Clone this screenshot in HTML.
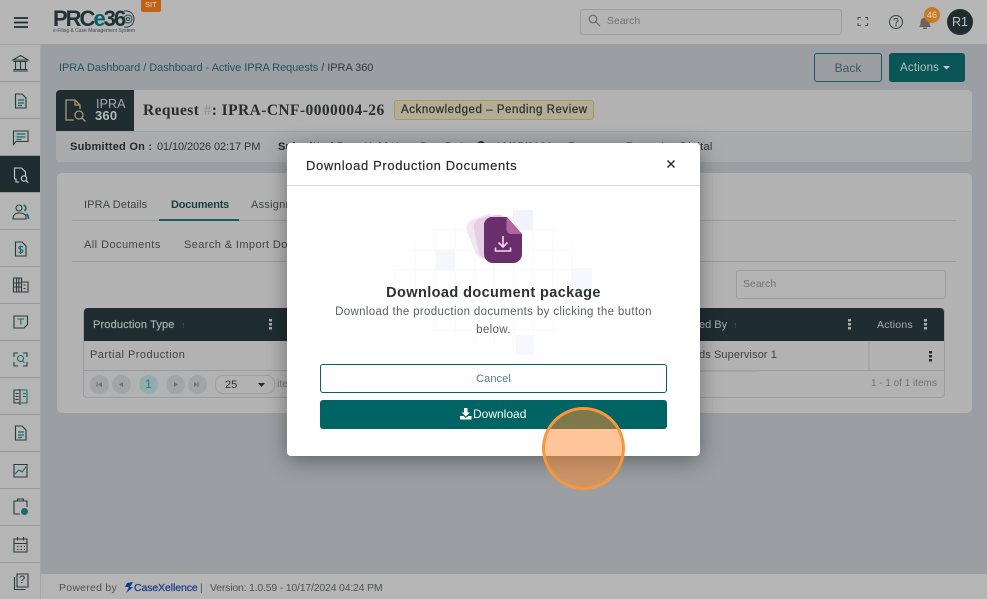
<!DOCTYPE html>
<html><head><meta charset="utf-8"><title>IPRA 360</title>
<style>
*{box-sizing:border-box}
html,body{margin:0;padding:0;width:987px;height:599px;overflow:hidden}
body{position:relative;background:#9b9fa3;font-family:"Liberation Sans",sans-serif;color:#333}
.a,.t{position:absolute}
.t{white-space:nowrap;line-height:16px;font-size:11.5px;letter-spacing:.25px;color:#3c3f41}
.b{font-weight:bold}
svg{position:absolute;overflow:visible}
.sep{position:absolute;left:0;width:40px;height:1px;background:#959799}
</style></head><body>

<!-- header -->
<div class="a" style="left:0;top:0;width:987px;height:44px;background:#b6b6b6"></div>
<svg style="left:14px;top:17px" width="15" height="11"><path d="M0 1h14M0 5.500h14M0 10h14" stroke="#1f2d30" stroke-width="1.700"/></svg>
<div class="t b" style="left:53px;top:7px;font-size:22px;line-height:24px;letter-spacing:-2px;color:#1f3236">PRC<span style="color:#00646a">e</span>36</div>
<svg style="left:123px;top:10px" width="13" height="18" fill="none" stroke="#2c4a4c" stroke-width="1.100"><path d="M1 1c6-1 10 3 10 8s-4 9-10 8"/><circle cx="5" cy="9" r="4"/><circle cx="5" cy="9" r="1.600"/></svg>
<div class="t" style="left:53px;top:27px;font-size:5px;line-height:8px;letter-spacing:-.03px;color:#3a4a4c">e-Filing &amp; Case Management System</div>
<div class="a" style="left:141px;top:0;width:20px;height:12px;background:#bf6217;border-radius:0 0 2px 2px"></div>
<div class="t" style="left:145px;top:0;font-size:7.500px;line-height:10px;color:#e8d8c8;letter-spacing:0">SIT</div>

<div class="a" style="left:580px;top:9px;width:262px;height:26px;border:1px solid #9a9c9e;border-radius:3px;background:#b4b4b4"></div>
<svg style="left:588px;top:14px" width="13" height="13" fill="none" stroke="#666" stroke-width="1.100"><circle cx="5" cy="5" r="3.800"/><path d="M8 8l4 4"/></svg>
<div class="t" style="left:607px;top:13px;font-size:10.500px;color:#6f7173;letter-spacing:0">Search</div>
<svg style="left:858px;top:17px" width="10" height="9" fill="none" stroke="#4a5052" stroke-width="1"><path d="M0 3V.5h3M7 .5h2.500V3M0 6v2.500h3M7 8.500h2.500V6"/></svg>
<svg style="left:889px;top:15px" width="14" height="14" fill="none" stroke="#3a4244" stroke-width="1"><circle cx="7" cy="7" r="6.500"/><path d="M5 5.500c0-3 4-3 4 0 0 1.500-2 1.500-2 3.200"/><circle cx="7" cy="10.500" r=".4"/></svg>
<svg style="left:918px;top:16px" width="14" height="13"><path d="M1 11c2-2 1-4 2-7s7-3 8 0 0 5 2 7z" fill="#6e6255"/><rect x="5" y="11.500" width="4" height="1.500" fill="#6e6255"/></svg>
<div class="a" style="left:924px;top:7px;width:16px;height:16px;border-radius:50%;background:#c97a25"></div>
<div class="t" style="left:924px;top:7px;width:16px;text-align:center;font-size:9px;color:#e6d9c7;letter-spacing:0">46</div>
<div class="a" style="left:947px;top:9px;width:26px;height:26px;border-radius:50%;background:#1f2d30"></div>
<div class="t" style="left:947px;top:14px;width:26px;text-align:center;font-size:12.500px;color:#c0c4c4;letter-spacing:0">R1</div>

<!-- sidebar -->
<div class="a" style="left:0;top:44px;width:41px;height:555px;background:#b5b5b5;border-right:1px solid #a2a4a6"></div>
<div class="sep" style="top:44px;background:#a4a5a6"></div>
<div class="sep" style="top:81px"></div><div class="sep" style="top:118px"></div><div class="sep" style="top:155px"></div>
<div class="sep" style="top:192px"></div><div class="sep" style="top:229px"></div><div class="sep" style="top:266px"></div>
<div class="sep" style="top:303px"></div><div class="sep" style="top:340px"></div><div class="sep" style="top:377px"></div>
<div class="sep" style="top:414px"></div><div class="sep" style="top:451px"></div><div class="sep" style="top:488px"></div>
<div class="sep" style="top:525px"></div><div class="sep" style="top:562px"></div>
<div class="a" style="left:0;top:156px;width:40px;height:36px;background:#1f2d30"></div>

<svg style="left:0;top:44px" width="40" height="555" fill="none" stroke="#2c3a3c" stroke-width="1.100">
<!-- bank -->
<path d="M13 16l7.500-4.500 7.500 4.500zM13.500 17.500h14M15.500 18v7M20.500 18v7M25.500 18v7M13.500 25.500h14M13 27h15"/>
<!-- doc -->
<path d="M15.500 50h6.500l4 4v10h-10.500z" fill="#aab3b2"/><path d="M18 56h6M18 59h6M18 61.500h4" stroke="#0f6f70" stroke-width="1.300"/>
<!-- chat -->
<path d="M13.500 87h14.500v10.500h-12l-2.500 3z"/><path d="M16.500 90h9M16.500 93h9M16.500 95.500h5" stroke="#0f6f70" stroke-width="1.300"/>
<!-- ipra active -->
<path d="M14.500 135v-11h7l4 4v4M14.500 135h1.500v3h3" stroke="#c9cfce" fill="none"/><circle cx="24" cy="134.500" r="2.700" stroke="#c9cfce"/><path d="M26 136.500l2.300 2.300" stroke="#c9cfce"/>
<!-- users -->
<circle cx="19" cy="164" r="3"/><path d="M13 175c0-5.500 4-6 6-6s7 .5 7 3.500v2.500z"/><path d="M23.500 161c3 1 3 4.500 1 6M26.500 170c1.500 1 2 3 2 5" stroke="#0f6f70" stroke-width="1.700"/>
<!-- doc $ -->
<path d="M15.500 198h6.500l4 4v10h-10.500z"/><path d="M23 203c-3-1.500-5 0-4 1.500s4 1 4 2.500-2 2-4.500 1M20.500 201.500v8.500" stroke="#0f6f70"/>
<!-- building -->
<path d="M13.500 234h8v14h-8zM21.500 238h6.500v10h-6.500zM13.500 239h8M13.500 243h8M16.500 234v14M18.800 234v14M23.500 241h2M23.500 244.500h2"/>
<!-- T note -->
<path d="M14 272h13.500v8.500l-3.500 3.500h-10z"/><path d="M17.500 275h6.500M20.800 275v5.500" stroke="#0f6f70"/>
<!-- scan -->
<path d="M14 313v-4h4M23 309h4v4M14 318v4h4M27 318v4h-4"/><circle cx="20.500" cy="314.500" r="3" stroke="#0f6f70"/><path d="M22.500 317l2 2" stroke="#0f6f70"/>
<!-- book -->
<path d="M20 346h-6v13h6M15.500 349.500h3M15.500 352.500h3M15.500 355.500h3"/><path d="M20 345v16"/><path d="M21 346h6v13h-6M23 349.500h3M23 352.500h3" stroke="#0f6f70"/>
<!-- doc -->
<path d="M15.500 382h6.500l4 4v10h-10.500z"/><path d="M18 388h6M18 391h6M18 393.500h4" stroke="#0f6f70" stroke-width="1.300"/>
<!-- chart -->
<path d="M14 420.500h13v12.500h-13z"/><path d="M15 430l4-4 3 2 4-5" stroke="#0f6f70"/>
<!-- clipboard -->
<path d="M20 470h-6v-13h13v6M17.500 457v-2h6v2"/><circle cx="24.500" cy="467.500" r="3.500" fill="#0f6f70" stroke="none"/>
<!-- calendar -->
<path d="M14 495h13v13h-13zM14 499.500h13M17.500 493v3.500M23.500 493v3.500"/><path d="M17 502.500h8M17 505.500h8" stroke-dasharray="1.500 2"/>
<!-- help -->
<path d="M17 530h11v13h-11zM14.500 533v12.500h11"/>
</svg>
<div class="t" style="left:19px;top:574px;font-size:11px;line-height:12px;color:#263336;letter-spacing:0">?</div>

<!-- breadcrumb -->
<div class="t" style="left:59px;top:60px;font-size:11px;color:#1f5459;letter-spacing:-.05px">IPRA Dashboard / Dashboard - Active IPRA Requests <span style="color:#2f3a3c">/ IPRA 360</span></div>
<div class="a" style="left:814px;top:53px;width:68px;height:29px;border:1px solid #1c5a5e;border-radius:3px"></div>
<div class="t" style="left:814px;top:60px;width:68px;text-align:center;font-size:12px;color:#3e5a5d;letter-spacing:0">Back</div>
<div class="a" style="left:889px;top:53px;width:76px;height:29px;background:#0a5555;border-radius:3px"></div>
<div class="t" style="left:900px;top:60px;font-size:11.500px;color:#b3c4c4;letter-spacing:.2px">Actions</div>
<svg style="left:943px;top:66px" width="8" height="4"><path d="M0 0h7L3.500 3.500z" fill="#c5d0d0"/></svg>

<!-- request card -->
<div class="a" style="left:56px;top:90px;width:916px;height:72px;background:#b2b2b2;border-radius:4px"></div>
<div class="a" style="left:56px;top:131px;width:916px;height:31px;background:#a9abac;border-top:1px solid #a0a2a3;border-radius:0 0 4px 4px"></div>
<div class="a" style="left:56px;top:90px;width:78px;height:41px;background:#1f2d30;border-radius:4px 0 0 0"></div>
<svg style="left:64px;top:98px" width="24" height="26" fill="none" stroke="#a89a75" stroke-width="1.300"><path d="M10 22H2V2h9l5 5v4M11 2v5h5"/><circle cx="15" cy="17" r="4"/><path d="M18 20l3.500 3.500"/></svg>
<div class="t" style="left:96px;top:96px;font-size:12.500px;color:#a3aaab;letter-spacing:.1px">IPRA</div>
<div class="t b" style="left:95px;top:108px;font-size:13px;color:#b5baba;letter-spacing:.2px">360</div>
<div class="t b" style="left:143px;top:102px;font-family:'Liberation Serif',serif;font-size:15.500px;line-height:18px;color:#2a2c2d;letter-spacing:.42px">Request <span style="color:#8d8f90;font-weight:normal">#</span>: IPRA-CNF-0000004-26</div>
<div class="a" style="left:394px;top:100px;width:200px;height:20px;background:#b3ad95;border:1px solid #a8985f;border-radius:3px"></div>
<div class="t" style="left:401px;top:102px;font-size:11.500px;color:#2f3132;letter-spacing:.55px;-webkit-text-stroke:.25px #2f3132">Acknowledged – Pending Review</div>
<div class="t b" style="left:70px;top:139px;font-size:11px;color:#26292a;letter-spacing:.25px">Submitted On :</div>
<div class="t" style="left:157px;top:139px;font-size:11px;color:#333;letter-spacing:-.1px">01/10/2026 02:17 PM</div>
<div class="t b" style="left:278px;top:139px;font-size:11px;color:#26292a;letter-spacing:.2px">Submitted By :</div>
<div class="t" style="left:364px;top:139px;font-size:11px;color:#333">Hold Up</div>
<div class="t b" style="left:420px;top:139px;font-size:11px;color:#26292a">Due Date :</div>
<div class="a" style="left:477px;top:141px;width:8px;height:8px;border-radius:50%;background:#333"></div>
<div class="t" style="left:495px;top:139px;font-size:11px;color:#333">10/25/2026</div>
<div class="t b" style="left:568px;top:139px;font-size:11px;color:#26292a">Response Format :</div>
<div class="t" style="left:680px;top:139px;font-size:11px;color:#333;letter-spacing:.3px">Digital</div>

<!-- main card -->
<div class="a" style="left:57px;top:173px;width:915px;height:240px;background:#b3b3b3;border-radius:5px"></div>
<div class="t" style="left:84px;top:197px;font-size:11px;color:#414445;letter-spacing:.13px">IPRA Details</div>
<div class="t b" style="left:171px;top:197px;font-size:11px;color:#173f42;letter-spacing:-.2px">Documents</div>
<div class="t" style="left:251px;top:197px;font-size:11px;color:#414445">Assignme</div>
<div class="a" style="left:72px;top:220px;width:884px;height:1px;background:#9b9d9e"></div>
<div class="a" style="left:159px;top:219px;width:80px;height:2px;background:#1c5a5e"></div>
<div class="t" style="left:84px;top:237px;font-size:11px;color:#414445;letter-spacing:.45px">All Documents</div>
<div class="t" style="left:184px;top:237px;font-size:11px;color:#414445;letter-spacing:.4px">Search &amp; Import Documents</div>
<div class="a" style="left:72px;top:261px;width:884px;height:1px;background:#9b9d9e"></div>
<div class="a" style="left:736px;top:270px;width:210px;height:29px;border:1px solid #9a9c9d;border-radius:3px;background:#b4b4b4"></div>
<div class="t" style="left:743px;top:276px;font-size:10.500px;color:#6f7173;letter-spacing:0">Search</div>

<!-- table -->
<div class="a" style="left:83px;top:308px;width:862px;height:90px;border:1px solid #9b9d9e;border-radius:4px;background:#b2b2b2"></div>
<div class="a" style="left:84px;top:308px;width:860px;height:33px;background:#1f2d30;border-radius:4px 4px 0 0"></div>
<div class="t" style="left:93px;top:317px;font-size:11px;color:#a8aeae;letter-spacing:.15px;-webkit-text-stroke:.2px #a8aeae">Production Type</div>
<div class="t" style="left:181px;top:317px;font-size:9px;color:#59625f;letter-spacing:0">↑</div>
<div class="t" style="left:699px;top:317px;font-size:11px;color:#a8aeae;letter-spacing:0">ed By</div>
<div class="t" style="left:733px;top:317px;font-size:9px;color:#59625f;letter-spacing:0">↑</div>
<div class="t" style="left:877px;top:317px;font-size:10.500px;color:#a8aeae;letter-spacing:.2px">Actions</div>
<svg style="left:269px;top:319px" width="3" height="11"><path d="M0 0h3v2.500H0zM0 4h3v2.500H0zM0 8h3v2.500H0z" fill="#a8aeae"/></svg>
<svg style="left:848px;top:319px" width="3" height="11"><path d="M0 0h3v2.500H0zM0 4h3v2.500H0zM0 8h3v2.500H0z" fill="#a8aeae"/></svg>
<svg style="left:924px;top:319px" width="3" height="11"><path d="M0 0h3v2.500H0zM0 4h3v2.500H0zM0 8h3v2.500H0z" fill="#a8aeae"/></svg>
<div class="t" style="left:90px;top:347px;font-size:11px;color:#3f4243;letter-spacing:.47px">Partial Production</div>
<div class="t" style="left:699px;top:347px;font-size:11px;color:#3f4243;letter-spacing:.1px">ds Supervisor 1</div>
<div class="a" style="left:868px;top:342px;width:2px;height:28px;background:#a7a9aa"></div>
<svg style="left:929px;top:351px" width="3" height="11"><path d="M0 0h3v2.500H0zM0 4h3v2.500H0zM0 8h3v2.500H0z" fill="#26292a"/></svg>
<div class="a" style="left:84px;top:370px;width:860px;height:1px;background:#9b9d9e"></div>
<div class="a" style="left:700px;top:370px;width:59px;height:2px;background:#a2a4a5"></div>
<div class="a" style="left:90px;top:375px;width:19px;height:19px;border-radius:50%;background:#a2a4a5"></div>
<div class="a" style="left:112px;top:375px;width:19px;height:19px;border-radius:50%;background:#a2a4a5"></div>
<div class="a" style="left:139px;top:375px;width:19px;height:19px;border-radius:50%;background:#90aeb0"></div>
<div class="a" style="left:166px;top:375px;width:19px;height:19px;border-radius:50%;background:#a2a4a5"></div>
<div class="a" style="left:188px;top:375px;width:19px;height:19px;border-radius:50%;background:#a2a4a5"></div>
<svg style="left:90px;top:375px" width="120" height="19" fill="#6e7071"><path d="M6.500 7v5h1V7zM8 9.500l4-2.500v5zM29 9.500l4-2.500v5zM84 7l4 2.500-4 2.500zM104 7l3.500 2.500-3.500 2.500zM107.500 7h1v5h-1z"/></svg>
<div class="t" style="left:139px;top:376px;width:19px;text-align:center;font-size:12px;color:#48706f;letter-spacing:0">1</div>
<div class="a" style="left:215px;top:375px;width:60px;height:19px;border:1px solid #9c9e9f;border-radius:8px"></div>
<div class="t" style="left:225px;top:377px;font-size:11px;color:#333;letter-spacing:0">25</div>
<svg style="left:258px;top:383px" width="8" height="5"><path d="M0 0h7L3.500 4z" fill="#26292a"/></svg>
<div class="t" style="left:277px;top:376px;font-size:10.500px;color:#707374;letter-spacing:0">ite</div>
<div class="t" style="left:871px;top:376px;font-size:10px;color:#707374;letter-spacing:-.02px">1 - 1 of 1 items</div>

<!-- footer -->
<div class="a" style="left:41px;top:574px;width:946px;height:25px;background:#b5b5b5"></div>
<div class="t" style="left:59px;top:580px;font-size:10.500px;color:#4f5253;letter-spacing:.25px">Powered by</div>
<svg style="left:125px;top:582px" width="9" height="11"><path d="M8 0L2 1 0 5h4L1 11l7-6H5z" fill="#0e3a8a"/></svg>
<div class="t" style="left:134px;top:580px;font-size:10.500px;color:#1c3f85;letter-spacing:-.1px;-webkit-text-stroke:.25px #1c3f85">CaseXellence</div>
<div class="t" style="left:200px;top:580px;font-size:10.500px;color:#4f5253;letter-spacing:0">|</div>
<div class="t" style="left:210px;top:580px;font-size:10.500px;color:#4f5253;letter-spacing:-.2px">Version: 1.0.59 - 10/17/2024 04:24 PM</div>

<!-- modal -->
<div class="a" style="left:287px;top:143px;width:413px;height:313px;background:#fff;border-radius:4px;box-shadow:0 5px 22px rgba(0,0,0,.38)"></div>
<div class="a" style="left:287px;top:185px;width:413px;height:1px;background:#d8dadb"></div>
<div class="t" style="left:306px;top:158px;font-size:13px;color:#2b2d2e;letter-spacing:.63px;-webkit-text-stroke:.2px #2b2d2e">Download Production Documents</div>
<svg style="left:667px;top:160px" width="8" height="8"><path d="M.5.5l7 7M7.500.5l-7 7" stroke="#2b2d2e" stroke-width="1.500"/></svg>

<svg style="left:375px;top:205px" width="236" height="150">
<defs><radialGradient id="g"><stop offset="0" stop-color="#fff"/><stop offset=".75" stop-color="#fff" stop-opacity=".6"/><stop offset="1" stop-color="#fff" stop-opacity="0"/></radialGradient><mask id="m"><rect width="236" height="150" fill="url(#g)"/></mask></defs>
<g mask="url(#m)">
<path d="M20 0v150M40 0v150M60 0v150M80 0v150M100 0v150M119 0v150M139 0v150M158 0v150M178 0v150M197 0v150M217 0v150M0 5h236M0 25h236M0 45h236M0 65h236M0 85h236M0 105h236M0 125h236M0 145h236" stroke="#f5f6f9" stroke-width="1" fill="none"/>
</g>
<g fill="#f1f4fc">
<rect x="138" y="5" width="20" height="20"/><rect x="61" y="45" width="19" height="20" opacity=".7"/><rect x="197" y="63" width="20" height="22" opacity=".6"/><rect x="141" y="130" width="18" height="20" opacity=".6"/>
</g>
</svg>
<svg style="left:465px;top:210px" width="62" height="58">
<rect x="5" y="6" width="32" height="40" rx="9" fill="#f3e6f1" transform="rotate(-22 21 26)"/>
<rect x="11" y="6" width="34" height="42" rx="9" fill="#e6cfe4" transform="rotate(-12 28 27)"/>
<path d="M27 7h15l15 17v20a9 9 0 0 1-9 9H28a9 9 0 0 1-9-9V15a8 8 0 0 1 8-8z" fill="#6a2e6c"/>
<path d="M41.500 7L57 24H46a4.500 4.500 0 0 1-4.500-4.500z" fill="#b4649f"/>
<path d="M38 26v11M33.500 32.500l4.500 4.500 4.500-4.500M30.500 37.500v3.500h15v-3.500" fill="none" stroke="#f1d9ec" stroke-width="1.600"/>
</svg>

<div class="t b" style="left:287px;top:285px;width:413px;text-align:center;font-size:14.500px;color:#2b3036;letter-spacing:.4px">Download document package</div>
<div class="t" style="left:287px;top:304px;width:413px;text-align:center;font-size:11.500px;color:#5d6063;letter-spacing:.35px">Download the production documents by clicking the button</div>
<div class="t" style="left:287px;top:322px;width:413px;text-align:center;font-size:11.500px;color:#5d6063;letter-spacing:.35px">below.</div>

<div class="a" style="left:320px;top:364px;width:347px;height:29px;border:1px solid #0a5f63;border-radius:3px"></div>
<div class="t" style="left:320px;top:371px;width:347px;text-align:center;font-size:11px;color:#4f7f82;letter-spacing:.1px">Cancel</div>
<div class="a" style="left:320px;top:400px;width:347px;height:29px;background:#006464;border-radius:3px"></div>
<svg style="left:460px;top:408px" width="12" height="12" fill="#fff"><path d="M4 0h3.500v4.500H10L5.800 8.500 1.500 4.500H4zM0 8h3.500l2.300 2 2.300-2H11.500v3.500H0z"/></svg>
<div class="t" style="left:473px;top:406px;font-size:12px;color:#fff;letter-spacing:0">Download</div>

<!-- click highlight -->
<div class="a" style="left:542px;top:407px;width:83px;height:83px;border-radius:50%;border:3px solid #f7963c;background:rgba(252,140,50,.5)"></div>
</body></html>
